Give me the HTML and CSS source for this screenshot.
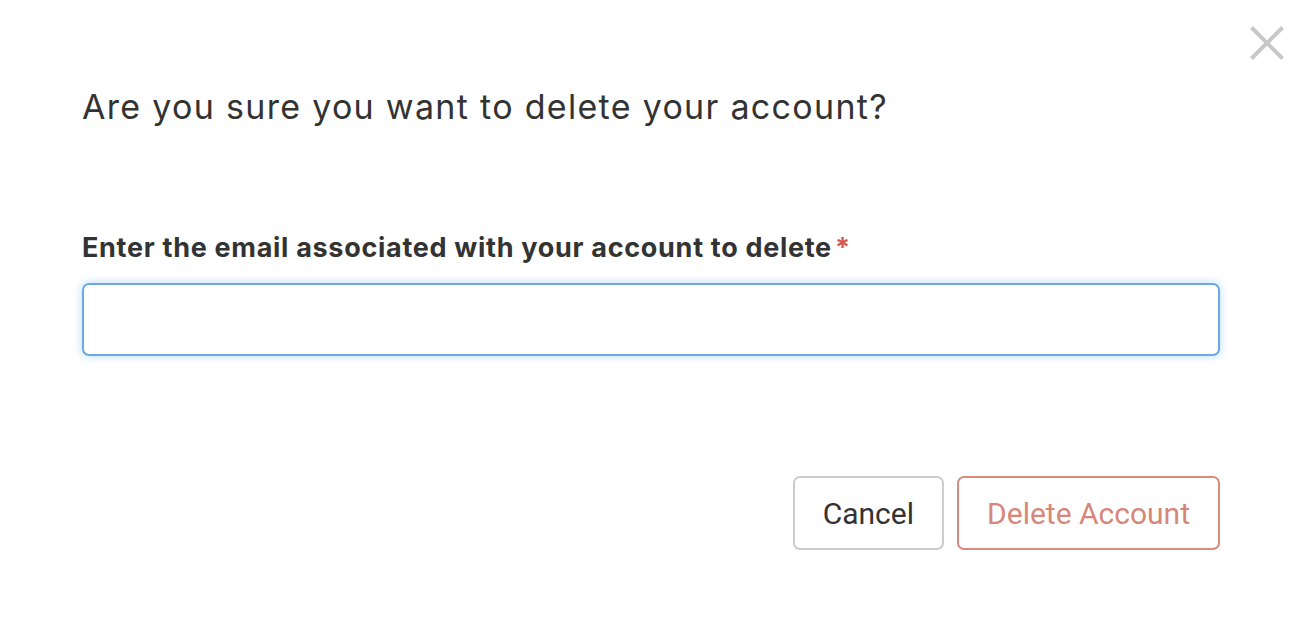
FILE: index.html
```html
<!DOCTYPE html>
<html>
<head>
<meta charset="utf-8">
<link rel="stylesheet" href="styles.css">
</head>
<body>
<div class="modal">
  <button class="close" aria-label="Close">
    <svg width="36" height="36" viewBox="0 0 36 36"><path d="M2.5 2.5 L33.5 33.5 M33.5 2.5 L2.5 33.5" stroke="#c8c8c8" stroke-width="4" fill="none"/></svg>
  </button>
  <h2 class="title">Are you sure you want to delete your account?</h2>
  <form class="form">
    <label class="label">Enter the email associated with your account to delete<span class="req">*</span></label>
    <input class="input" type="text">
    <div class="actions">
      <button type="button" class="btn btn-cancel">Cancel</button>
      <button type="button" class="btn btn-delete">Delete Account</button>
    </div>
  </form>
</div>
</body>
</html>
```
FILE: styles.css
```css
html, body {
  margin: 0;
  padding: 0;
  background: #fff;
}
body {
  font-family: Roboto, "Liberation Sans", sans-serif;
  color: #333;
}
.modal {
  position: relative;
  width: 1302px;
  height: 620px;
  box-sizing: border-box;
  padding: 87px 82px 0 82px;
}
.close {
  position: absolute;
  top: 25px;
  right: 17px;
  background: none;
  border: none;
  padding: 0;
  width: 36px;
  height: 36px;
  cursor: pointer;
}
.close svg { display: block; }
.title {
  margin: 0;
  font-family: Inter, Roboto, sans-serif;
  font-size: 34px;
  font-weight: 400;
  line-height: 40px;
  letter-spacing: 1.3px;
  color: #333;
}
.form {
  display: flex;
  flex-direction: column;
  margin-top: 105px;
}
.label {
  font-family: Inter, Roboto, sans-serif;
  font-size: 27px;
  font-weight: 700;
  line-height: 32px;
  letter-spacing: 0.7px;
  color: #333;
}
.req {
  color: #d65a50;
  margin-left: 3px;
}
.input {
  margin-top: 19px;
  height: 73px;
  box-sizing: border-box;
  border: 2px solid #6ea8e4;
  border-radius: 7px;
  box-shadow: 0 0 10px rgba(102, 175, 233, 0.45);
  outline: none;
  font-size: 28px;
  padding: 0 20px;
}
.actions {
  display: flex;
  justify-content: flex-end;
  gap: 13px;
  margin-top: 120px;
}
.btn {
  height: 74px;
  box-sizing: border-box;
  border-radius: 7px;
  background: #fff;
  font-family: Roboto, "Liberation Sans", sans-serif;
  font-size: 30px;
  padding: 0 28px;
  cursor: pointer;
}
.btn-cancel {
  border: 2px solid #cccccc;
  color: #333;
}
.btn-delete {
  border: 2px solid #dc8a7d;
  color: #d6877a;
}
```
